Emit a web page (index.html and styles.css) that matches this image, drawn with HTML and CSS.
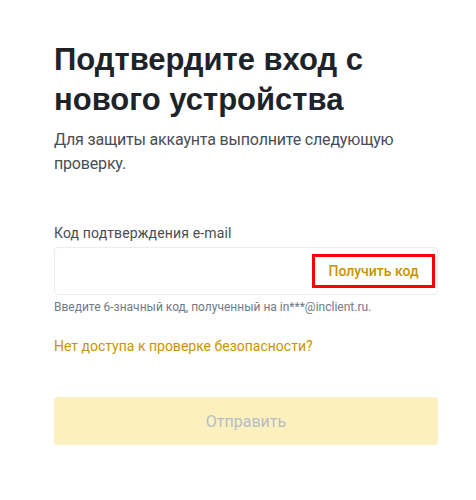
FILE: index.html
```html
<!DOCTYPE html>
<html lang="ru">
<head>
  <meta charset="UTF-8">
  <meta name="viewport" content="width=device-width, initial-scale=1.0">
  <title>Подтверждение входа</title>
  <link rel="stylesheet" href="styles.css">
</head>
<body>
  <div class="page">
    <h1 class="title">Подтвердите вход с нового устройства</h1>
    <p class="subtitle">Для защиты аккаунта выполните следующую проверку.</p>

    <form class="form" id="verifyForm">
      <label class="label" for="emailCode">Код подтверждения e-mail</label>
      <div class="field">
        <input class="field-input" id="emailCode" type="text" maxlength="6" autocomplete="one-time-code">
        <button type="button" class="get-code">Получить код</button>
      </div>
      <div class="hint">Введите 6-значный код, полученный на in***@inclient.ru.</div>

      <a class="help-link" href="#">Нет доступа к проверке безопасности?</a>

      <button type="submit" class="submit" disabled>Отправить</button>
    </form>
  </div>
</body>
</html>
```

FILE: styles.css
```css
body {
  margin: 0;
  background-color: #fff;
  font-family: Roboto, 'Noto Sans', Arial, sans-serif;
  color: #1e2329;
}
.page {
  width: 384px;
  padding: 40px 0 0 54px;
}
.title {
  margin: 0;
  font-family: 'Liberation Sans', Arial, sans-serif;
  font-size: 31px;
  line-height: 40px;
  font-weight: 700;
  color: #1e2329;
}
.subtitle {
  margin: 8px 0 0;
  font-size: 16px;
  line-height: 24px;
  letter-spacing: -0.18px;
  color: #474d57;
}
.form {
  display: flex;
  flex-direction: column;
  margin-top: 47px;
}
.label {
  font-size: 14px;
  line-height: 20px;
  letter-spacing: 0.15px;
  color: #474d57;
  margin-bottom: 4px;
}
.field {
  display: flex;
  align-items: center;
  height: 48px;
  box-sizing: border-box;
  border: 1px solid #eaecef;
  border-radius: 4px;
  padding: 0 2px 0 12px;
}
.field-input {
  flex: 1;
  min-width: 0;
  border: none;
  outline: none;
  font: inherit;
  font-size: 14px;
  background: transparent;
}
.get-code {
  width: 123px;
  height: 34px;
  box-sizing: border-box;
  border: 3px solid #ff0000;
  background: transparent;
  font-family: inherit;
  font-size: 14px;
  font-weight: 500;
  color: #c99400;
  cursor: pointer;
  padding: 0;
}
.hint {
  margin-top: 4px;
  font-size: 12px;
  line-height: 16px;
  color: #707a8a;
}
.help-link {
  margin-top: 21px;
  font-size: 14px;
  line-height: 20px;
  color: #c99400;
  text-decoration: none;
  align-self: flex-start;
}
.submit {
  margin-top: 41px;
  height: 48px;
  border: none;
  border-radius: 4px;
  background-color: #fcf0bf;
  font-family: inherit;
  font-size: 16px;
  font-weight: 400;
  color: #b7bdc6;
}
```
